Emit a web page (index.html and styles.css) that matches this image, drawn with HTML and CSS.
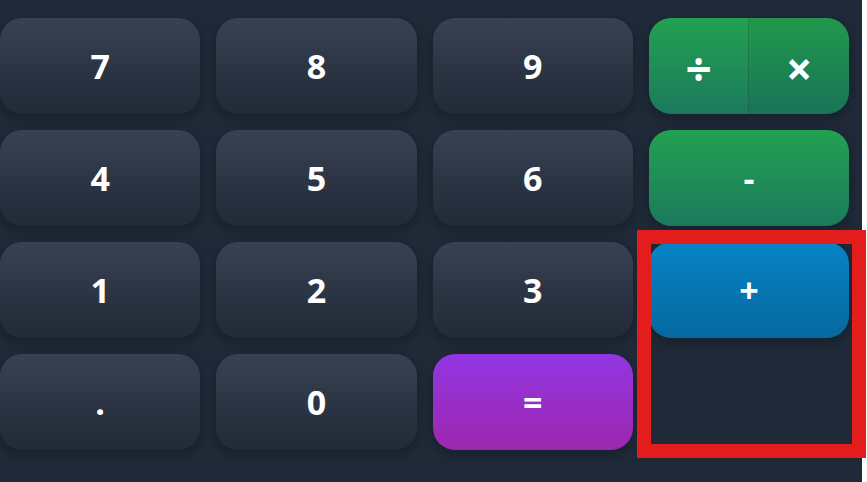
FILE: index.html
```html
<!DOCTYPE html>
<html>
<head>
<meta charset="utf-8">
<link rel="stylesheet" href="styles.css">
</head>
<body>
<div class="calc">
  <div class="keys">
    <button class="key num">7</button>
    <button class="key num">8</button>
    <button class="key num">9</button>
    <div class="key split">
      <button class="half">÷</button>
      <button class="half right">×</button>
    </div>
    <button class="key num">4</button>
    <button class="key num">5</button>
    <button class="key num">6</button>
    <button class="key op">-</button>
    <button class="key num">1</button>
    <button class="key num">2</button>
    <button class="key num">3</button>
    <button class="key plus">+</button>
    <button class="key num">.</button>
    <button class="key num">0</button>
    <button class="key eq">=</button>
  </div>
  <div class="annot"></div>
</div>
</body>
</html>
```
FILE: styles.css
```css
* { box-sizing: border-box; }
html, body { margin: 0; padding: 0; background: #ffffff; }
.calc {
  position: relative;
  width: 862px;
  height: 482px;
  background: #1f2937;
  padding-top: 18px;
}
.keys {
  width: 849px;
  display: grid;
  grid-template-columns: repeat(4, 1fr);
  grid-auto-rows: 96px;
  gap: 16px;
}
.key {
  border: none;
  border-radius: 22px;
  color: #ffffff;
  font-family: "Open Sans", "DejaVu Sans", sans-serif;
  font-weight: 700;
  font-size: 34px;
  display: flex;
  align-items: center;
  justify-content: center;
  padding: 0 0 0 0;
  box-shadow: 0 4px 10px rgba(10, 14, 24, 0.35);
}
.num { background: linear-gradient(180deg, #384152 0%, #222a38 100%); }
.op, .split { background: linear-gradient(180deg, #23a152 0%, #1b7a5c 100%); }
.split { overflow: hidden; display: flex; align-items: stretch; }
.half {
  flex: 1;
  border: none;
  background: transparent;
  color: #ffffff;
  font-family: "Open Sans", "DejaVu Sans", sans-serif;
  font-weight: 700;
  font-size: 46px;
  line-height: 1;
  padding: 4px 0 0 0;
}
.half.right {
  background: rgba(0, 0, 0, 0.05);
  border-left: 1px solid rgba(0, 0, 0, 0.12);
}
.plus { background: linear-gradient(180deg, #0684c6 0%, #06689f 100%); }
.eq { background: linear-gradient(180deg, #9336e2 0%, #9d27ae 100%); }
.annot {
  position: absolute;
  left: 637px;
  top: 230px;
  width: 229px;
  height: 228px;
  border: 14px solid #e31c1c;
}
```
